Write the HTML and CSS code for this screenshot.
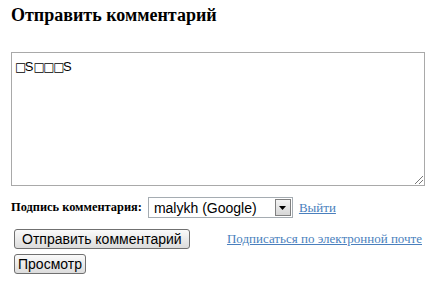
FILE: index.html
```html
<!DOCTYPE html>
<html>
<head>
<meta charset="utf-8">
<link rel="stylesheet" href="styles.css">
</head>
<body>
<div class="form">
  <h3 class="title">Отправить комментарий</h3>
  <div class="area-wrap">
    <div class="area">
      <span class="text"><span class="box">□</span>S<span class="box">□□□</span>S</span>
      <svg class="grip" width="9" height="9" viewBox="0 0 9 9">
        <g fill="#777">
          <rect x="8" y="1" width="1" height="1"/><rect x="7" y="2" width="1" height="1"/><rect x="6" y="3" width="1" height="1"/><rect x="5" y="4" width="1" height="1"/><rect x="4" y="5" width="1" height="1"/><rect x="3" y="6" width="1" height="1"/><rect x="2" y="7" width="1" height="1"/><rect x="1" y="8" width="1" height="1"/>
          <rect x="8" y="5" width="1" height="1"/><rect x="7" y="6" width="1" height="1"/><rect x="6" y="7" width="1" height="1"/><rect x="5" y="8" width="1" height="1"/>
        </g>
      </svg>
    </div>
  </div>
  <div class="sig-row">
    <span class="sig-label">Подпись комментария:</span>
    <div class="select">
      <span class="select-text">malykh (Google)</span>
      <span class="select-btn">
        <svg width="7" height="4" viewBox="0 0 7 4"><path d="M0 0H7L3.5 4Z" fill="#000"/></svg>
      </span>
    </div>
    <a class="link" href="#">Выйти</a>
  </div>
  <div class="btn-row">
    <button class="btn btn-main">Отправить комментарий</button>
    <a class="link sub" href="#">Подписаться по электронной почте</a>
  </div>
  <div class="btn-row2">
    <button class="btn btn-prev">Просмотр</button>
  </div>
</div>
</body>
</html>
```
FILE: styles.css
```css
html, body {
  margin: 0;
  padding: 0;
  background: #fff;
}
.form {
  padding: 0 0 0 11px;
  width: 414px;
}
.title {
  font-family: "Liberation Serif", serif;
  font-size: 18px;
  font-weight: bold;
  color: #000;
  margin: 0;
  padding-top: 5px;
  line-height: 20px;
}
.area-wrap {
  padding-top: 27px;
}
.area {
  position: relative;
  box-sizing: border-box;
  width: 414px;
  height: 134px;
  border: 1px solid #a9a9a9;
  background: #fff;
  padding: 4px 3px;
}
.text {
  font-family: "Liberation Sans", sans-serif;
  font-size: 13px;
  line-height: 15px;
  color: #000;
}
.box {
  font-family: "DejaVu Sans", sans-serif;
  font-size: 12px;
  line-height: 15px;
  letter-spacing: -1.5px;
}
.grip {
  position: absolute;
  right: 1px;
  bottom: 1px;
}
.sig-row {
  display: flex;
  align-items: center;
  margin-top: 11px;
  height: 21px;
}
.sig-label {
  font-family: "Liberation Serif", serif;
  font-size: 12.4px;
  font-weight: bold;
  margin-right: 6px;
}
.select {
  box-sizing: border-box;
  width: 145px;
  height: 21px;
  border: 1px solid #a5acb2;
  display: flex;
  align-items: center;
  justify-content: space-between;
  padding: 0 1px 0 5px;
}
.select-text {
  font-family: "Liberation Sans", sans-serif;
  font-size: 14px;
}
.select-btn {
  box-sizing: border-box;
  width: 16px;
  height: 17px;
  border: 1px solid #808080;
  background: linear-gradient(#f4f4f4, #d6d6d6);
  display: flex;
  align-items: center;
  justify-content: center;
}
.link {
  font-family: "Liberation Serif", serif;
  font-size: 13px;
  color: #4a7fbd;
  text-decoration: underline;
  margin-left: 6px;
}
.btn-row {
  display: flex;
  align-items: center;
  justify-content: space-between;
  margin-top: 11px;
  padding-left: 3px;
}
.btn-row .sub {
  margin-right: 3px;
}
.btn-row2 {
  margin-top: 5px;
  padding-left: 3px;
}
.btn {
  font-family: "Liberation Sans", sans-serif;
  font-size: 14px;
  color: #000;
  background: linear-gradient(#fafafa, #dcdcdc);
  border: 1px solid #707070;
  border-radius: 3px;
  height: 20px;
  padding: 0 7px;
  line-height: 18px;
  margin: 0;
}
.btn-prev {
  padding: 0 3px;
}
```
